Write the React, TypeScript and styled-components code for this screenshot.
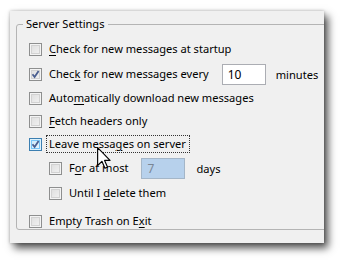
import React from "react";
import styled, { createGlobalStyle, css } from "styled-components";

const GlobalStyle = createGlobalStyle`
  body {
    margin: 0;
    background: #ffffff;
    font-family: "Noto Sans", "Open Sans", sans-serif;
  }
`;

const Stage = styled.div`
  width: 344px;
  height: 263px;
  padding: 11px 0 0 10px;
  box-sizing: border-box;
  position: relative;
  overflow: hidden;
`;

const Panel = styled.div`
  width: 314px;
  height: 232px;
  background: #f0f0f0;
  box-shadow: 4px 5px 8px rgba(0, 0, 0, 0.7), 0 0 3px rgba(0, 0, 0, 0.25);
  overflow: hidden;
  padding-left: 6px;
  box-sizing: border-box;
`;

const Group = styled.fieldset`
  margin: 5px 0 0 0;
  padding: 0;
  width: 330px;
  height: 214px;
  box-sizing: border-box;
  border: 1px solid #b4b4b4;
  border-radius: 3px;
  font-size: 11.1px;
  color: #000;
`;

const Legend = styled.legend`
  margin-left: 6px;
  padding: 0 3px;
  line-height: 16px;
`;

const Row = styled.div<{ $mt?: number; $indent?: boolean }>`
  display: flex;
  align-items: center;
  height: 24px;
  margin-top: ${(p) => p.$mt ?? 0}px;
  padding-left: ${(p) => (p.$indent ? 32 : 12)}px;
`;

const Box = styled.span<{ $focus?: boolean }>`
  width: 13px;
  height: 13px;
  box-sizing: border-box;
  border: 1px solid #8e8f8f;
  flex: none;
  position: relative;
  background: linear-gradient(135deg, #dcdcdc, #f4f4f4);
  box-shadow: inset 0 0 0 1px #f4f4f4, inset 0 0 0 2px #d2d2d2;
  ${(p) =>
    p.$focus &&
    css`
      border-color: #3c7fb1;
      background: linear-gradient(135deg, #c9e7f8, #eef8fd);
      box-shadow: inset 0 0 0 1px #def2fc, inset 0 0 0 2px #79c6f9;
    `}
  svg {
    position: absolute;
    left: 1px;
    top: 1px;
  }
`;

const Label = styled.span<{ $focus?: boolean }>`
  margin-left: 4px;
  padding: 0 2px;
  line-height: 16px;
  border: 1px solid transparent;
  white-space: nowrap;
  u {
    text-decoration: underline;
    text-underline-offset: 2px;
  }
  ${(p) =>
    p.$focus &&
    css`
      border: 1px dotted #333;
      padding: 0 3px 0 2px;
    `}
`;

const Field = styled.span<{ $disabled?: boolean; $w: number; $ml: number }>`
  display: inline-flex;
  align-items: center;
  width: ${(p) => p.$w}px;
  height: 21px;
  margin-left: ${(p) => p.$ml}px;
  box-sizing: border-box;
  padding-left: 5px;
  border: 1px solid ${(p) => (p.$disabled ? "#a4b6c8" : "#abadb3")};
  background: ${(p) => (p.$disabled ? "#b7d1ec" : "#ffffff")};
  color: ${(p) => (p.$disabled ? "#7a8694" : "#000")};
  font-size: 12px;
  flex: none;
`;

const After = styled.span<{ $ml: number }>`
  margin-left: ${(p) => p.$ml}px;
`;

const Cursor = styled.svg`
  position: absolute;
  left: 97px;
  top: 147px;
`;

const Tick = () => (
  <svg width="9" height="9" viewBox="0 0 9 9">
    <path d="M1.5 4.2 L3.6 7 L7.6 1" fill="none" stroke="#4a5e8f" strokeWidth="1.8" />
  </svg>
);

const Check: React.FC<{ checked?: boolean; focus?: boolean }> = ({ checked, focus }) => (
  <Box $focus={focus}>{checked && <Tick />}</Box>
);

export default function App() {
  return (
    <>
      <GlobalStyle />
      <Stage>
        <Panel>
          <Group>
            <Legend>Server Settings</Legend>
            <Row $mt={5}>
              <Check />
              <Label>
                <u>C</u>heck for new messages at startup
              </Label>
            </Row>
            <Row $mt={1}>
              <Check checked />
              <Label>
                Chec<u>k</u> for new messages every
              </Label>
              <Field $w={44} $ml={10}>10</Field>
              <After $ml={10}>minutes</After>
            </Row>
            <Row>
              <Check />
              <Label>
                Auto<u>m</u>atically download new messages
              </Label>
            </Row>
            <Row $mt={-1}>
              <Check />
              <Label>
                <u>F</u>etch headers only
              </Label>
            </Row>
            <Row $mt={-1}>
              <Check checked focus />
              <Label $focus>
                Leave messa<u>g</u>es on server
              </Label>
            </Row>
            <Row $indent>
              <Check />
              <Label>
                F<u>o</u>r at most
              </Label>
              <Field $disabled $w={44} $ml={10}>7</Field>
              <After $ml={11}>days</After>
            </Row>
            <Row $mt={1} $indent>
              <Check />
              <Label>
                Until I <u>d</u>elete them
              </Label>
            </Row>
            <Row $mt={4}>
              <Check />
              <Label>
                Empty Trash on E<u>x</u>it
              </Label>
            </Row>
          </Group>
        </Panel>
        <Cursor width="14" height="22" viewBox="0 0 12 19">
          <path
            d="M0.5 0.5 L0.5 16 L4.2 12.4 L6.8 18.3 L9 17.3 L6.5 11.6 L11.2 11.6 Z"
            fill="#ffffff"
            stroke="#000000"
            strokeWidth="1"
            strokeLinejoin="round"
          />
        </Cursor>
      </Stage>
    </>
  );
}
